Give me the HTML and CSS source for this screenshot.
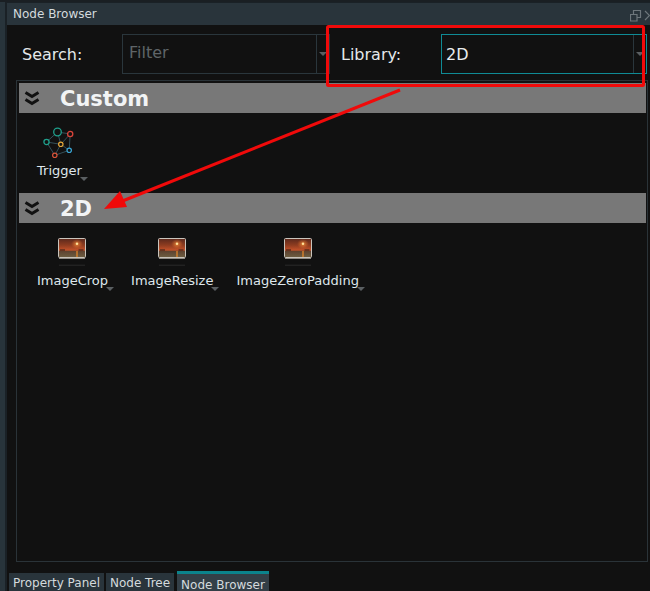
FILE: index.html
```html
<!DOCTYPE html>
<html lang="en">
<head>
<meta charset="utf-8">
<title>Node Browser</title>
<link rel="stylesheet" href="styles.css">
</head>
<body>
<svg width="0" height="0" class="defs">
  <defs>
    <linearGradient id="sky" x1="0" y1="0" x2="0" y2="1">
      <stop offset="0" stop-color="#5a281c"/>
      <stop offset="0.35" stop-color="#8e3c20"/>
      <stop offset="0.62" stop-color="#c4522a"/>
      <stop offset="0.66" stop-color="#5e4230"/>
      <stop offset="1" stop-color="#6e5f42"/>
    </linearGradient>
    <radialGradient id="glow" cx="0.5" cy="0.5" r="0.5">
      <stop offset="0" stop-color="#ff9a40" stop-opacity="0.8"/>
      <stop offset="1" stop-color="#e06a2a" stop-opacity="0"/>
    </radialGradient>
    <symbol id="img" viewBox="0 0 28 28">
      <rect x="0.500" y="0.500" width="27" height="19" rx="1" fill="url(#sky)" stroke="#c9c4bc"/>
      <ellipse cx="19" cy="6" rx="6" ry="5" fill="url(#glow)"/>
      <circle cx="19" cy="5.800" r="1.200" fill="#ffe29a"/>
      <rect x="18.300" y="13" width="1.400" height="6" fill="#d9822c"/>
      <path d="M2 12h5M20.500 12h5" stroke="#2a1a14" stroke-width="1.200"/>
      <path d="M1 20.500h26" stroke="#8f8a82"/>
      <path d="M1 27.200h26" stroke="#2b2b2b"/>
    </symbol>
    <symbol id="chev" viewBox="0 0 16 15">
      <path d="M1.500 1.500L8 5.500L14.500 1.500M1.500 8.500L8 12.500L14.500 8.500" fill="none" stroke="#111" stroke-width="3"/>
    </symbol>
  </defs>
</svg>
<div class="shell">
  <div class="titlebar">
    <span class="title">Node Browser</span>
    <svg class="winbtns" width="20" height="13" viewBox="0 0 20 13"><path d="M0.500 5.500h6.500v6.500h-6.500zM3.500 5V1.500h7v7h-3" fill="none" stroke="#6d767b" stroke-width="1.200"/><path d="M15 2l4.500 4.500L15 11" fill="none" stroke="#6d767b" stroke-width="1.200"/></svg>
  </div>
  <div class="panel">
    <div class="toolbar">
      <label class="lbl lbl-search">Search:</label>
      <div class="combo combo-filter"><span class="placeholder">Filter</span><span class="drop"><i class="caret"></i></span></div>
      <label class="lbl lbl-lib">Library:</label>
      <div class="combo combo-lib"><span class="value">2D</span><span class="drop"><i class="caret"></i></span></div>
    </div>
    <div class="tree">
      <div class="section">
        <svg class="chev" width="16" height="15"><use href="#chev"/></svg>
        <span class="sec-name">Custom</span>
      </div>
      <div class="items items-custom">
        <div class="item item-trigger">
          <svg class="ico" width="34" height="34" viewBox="0 0 34 34">
            <path d="M15.500 5L28.200 7L27.200 23.300L12.800 28.300L4.500 15L15.500 5M15.500 5L18.800 17.300L4.500 15M18.800 17.300L28.200 7M18.800 17.300L27.200 23.300M18.800 17.300L12.800 28.300" stroke="#33505a" stroke-width="1" fill="none"/>
            <circle cx="15.500" cy="5" r="3.800" fill="#111" stroke="#1fa08c" stroke-width="1.300"/>
            <circle cx="28.200" cy="7" r="2.600" fill="#111" stroke="#d8443a" stroke-width="1.300"/>
            <circle cx="4.500" cy="15" r="2.600" fill="#111" stroke="#1fa08c" stroke-width="1.300"/>
            <circle cx="18.800" cy="17.300" r="2.200" fill="#111" stroke="#e5a83a" stroke-width="1.200"/>
            <circle cx="27.200" cy="23.300" r="2.200" fill="#111" stroke="#3aa8d8" stroke-width="1.200"/>
            <circle cx="12.800" cy="28.300" r="2.200" fill="#111" stroke="#d8543a" stroke-width="1.200"/>
          </svg>
          <span class="item-name">Trigger</span><i class="caret item-caret"></i>
        </div>
      </div>
      <div class="section">
        <svg class="chev" width="16" height="15"><use href="#chev"/></svg>
        <span class="sec-name">2D</span>
      </div>
      <div class="items items-2d">
        <div class="item item-crop">
          <svg class="ico" width="28" height="28"><use href="#img"/></svg>
          <span class="item-name">ImageCrop</span><i class="caret item-caret"></i>
        </div>
        <div class="item item-resize">
          <svg class="ico" width="28" height="28"><use href="#img"/></svg>
          <span class="item-name">ImageResize</span><i class="caret item-caret"></i>
        </div>
        <div class="item item-zero">
          <svg class="ico" width="28" height="28"><use href="#img"/></svg>
          <span class="item-name">ImageZeroPadding</span><i class="caret item-caret"></i>
        </div>
      </div>
    </div>
    <div class="tabs">
      <div class="tab">Property Panel</div>
      <div class="tab">Node Tree</div>
      <div class="tab tab-active">Node Browser</div>
    </div>
  </div>
  <svg class="annot" width="650" height="591" viewBox="0 0 650 591">
    <rect x="327.500" y="26.500" width="316" height="59" rx="1" fill="none" stroke="#f00a0a" stroke-width="3"/>
    <path d="M400 90L120 202" stroke="#f00a0a" stroke-width="3" fill="none"/>
    <path d="M104 209L120 191L127 207Z" fill="#f00a0a"/>
  </svg>
</div>
</body>
</html>
```
FILE: styles.css
```css
* { box-sizing: border-box; }
html, body { margin: 0; padding: 0; height: 100%; background: #26323a; overflow: hidden; }
body { font-family: "DejaVu Sans", sans-serif; color: #e4e8ea; }
.defs { position: absolute; }
.shell { position: relative; width: 650px; height: 591px; padding: 3px 0 0 7px; background: linear-gradient(to right, #28343b 5px, #1a2126 5px); box-shadow: inset 0 2px 0 #1a1f23; }
.titlebar { height: 22px; background: #29343b; display: flex; align-items: center; justify-content: space-between; padding-left: 6px; }
.title { font-size: 12px; color: #d4dadd; }
.winbtns { flex: none; margin-top: 2px; }
.panel { height: 566px; background: #111111; display: flex; flex-direction: column; padding: 0 2px 0 9px; }
.toolbar { height: 55px; flex: none; display: flex; align-items: flex-start; padding-top: 9px; }
.lbl { font-size: 16px; line-height: 41px; color: #e4e8ea; }
.lbl-search { margin-left: -3px; width: 109px; padding-left: 9px; }
.lbl-lib { width: 100px; margin-left: 11px; }
.combo { height: 40px; display: flex; border: 1px solid #2a363c; }
.combo-filter { width: 208px; }
.combo-lib { width: 206px; border-color: #0f8b95; }
.placeholder { flex: 1; font-size: 16px; line-height: 35px; padding-left: 6px; color: #5f6568; }
.value { flex: 1; font-size: 16px; line-height: 39px; padding-left: 4px; color: #e8ecee; }
.drop { width: 13px; border-left: 1px solid #2a363c; display: flex; align-items: center; justify-content: center; }
.caret { display: block; width: 0; height: 0; border: 4px solid transparent; border-top-color: #5a5f62; border-bottom: 0; }
.tree { height: 482px; flex: none; border: 1px solid #2a3338; padding: 2px 1px 0 2px; }
.section { height: 30px; background: #787878; display: flex; align-items: center; padding-left: 5px; }
.chev { flex: none; }
.sec-name { margin-left: 20px; margin-top: 2px; font-size: 21px; font-weight: 700; color: #f2f4f5; }
.items { position: relative; height: 80px; display: flex; align-items: flex-start; }
.items-custom { padding: 14px 0 0 18px; }
.items-2d { padding: 15px 0 0 18px; gap: 23px; }
.item { display: flex; flex-direction: column; align-items: center; position: relative; }
.item-trigger .ico { margin-bottom: 2px; }
.items-2d .ico { margin-bottom: 7px; }
.item-crop .ico { margin-left: -2px; }
.item-name { font-size: 13px; line-height: 15px; color: #dfe7ec; white-space: nowrap; }
.item-caret { position: absolute; right: -6px; bottom: -3px; }
.tabs { flex: 1; display: flex; align-items: flex-end; gap: 2px; margin-left: -7px; }
.tab { height: 18px; padding: 1px 4px 0; font-size: 12px; line-height: 18px; background: #29343b; color: #d4dadd; }
.tab-active { height: 20px; margin-left: 1px; padding: 0 4px; background: #333f47; border-top: 3px solid #0b838c; line-height: 22px; }
.annot { position: absolute; left: 0; top: 0; pointer-events: none; }
```
